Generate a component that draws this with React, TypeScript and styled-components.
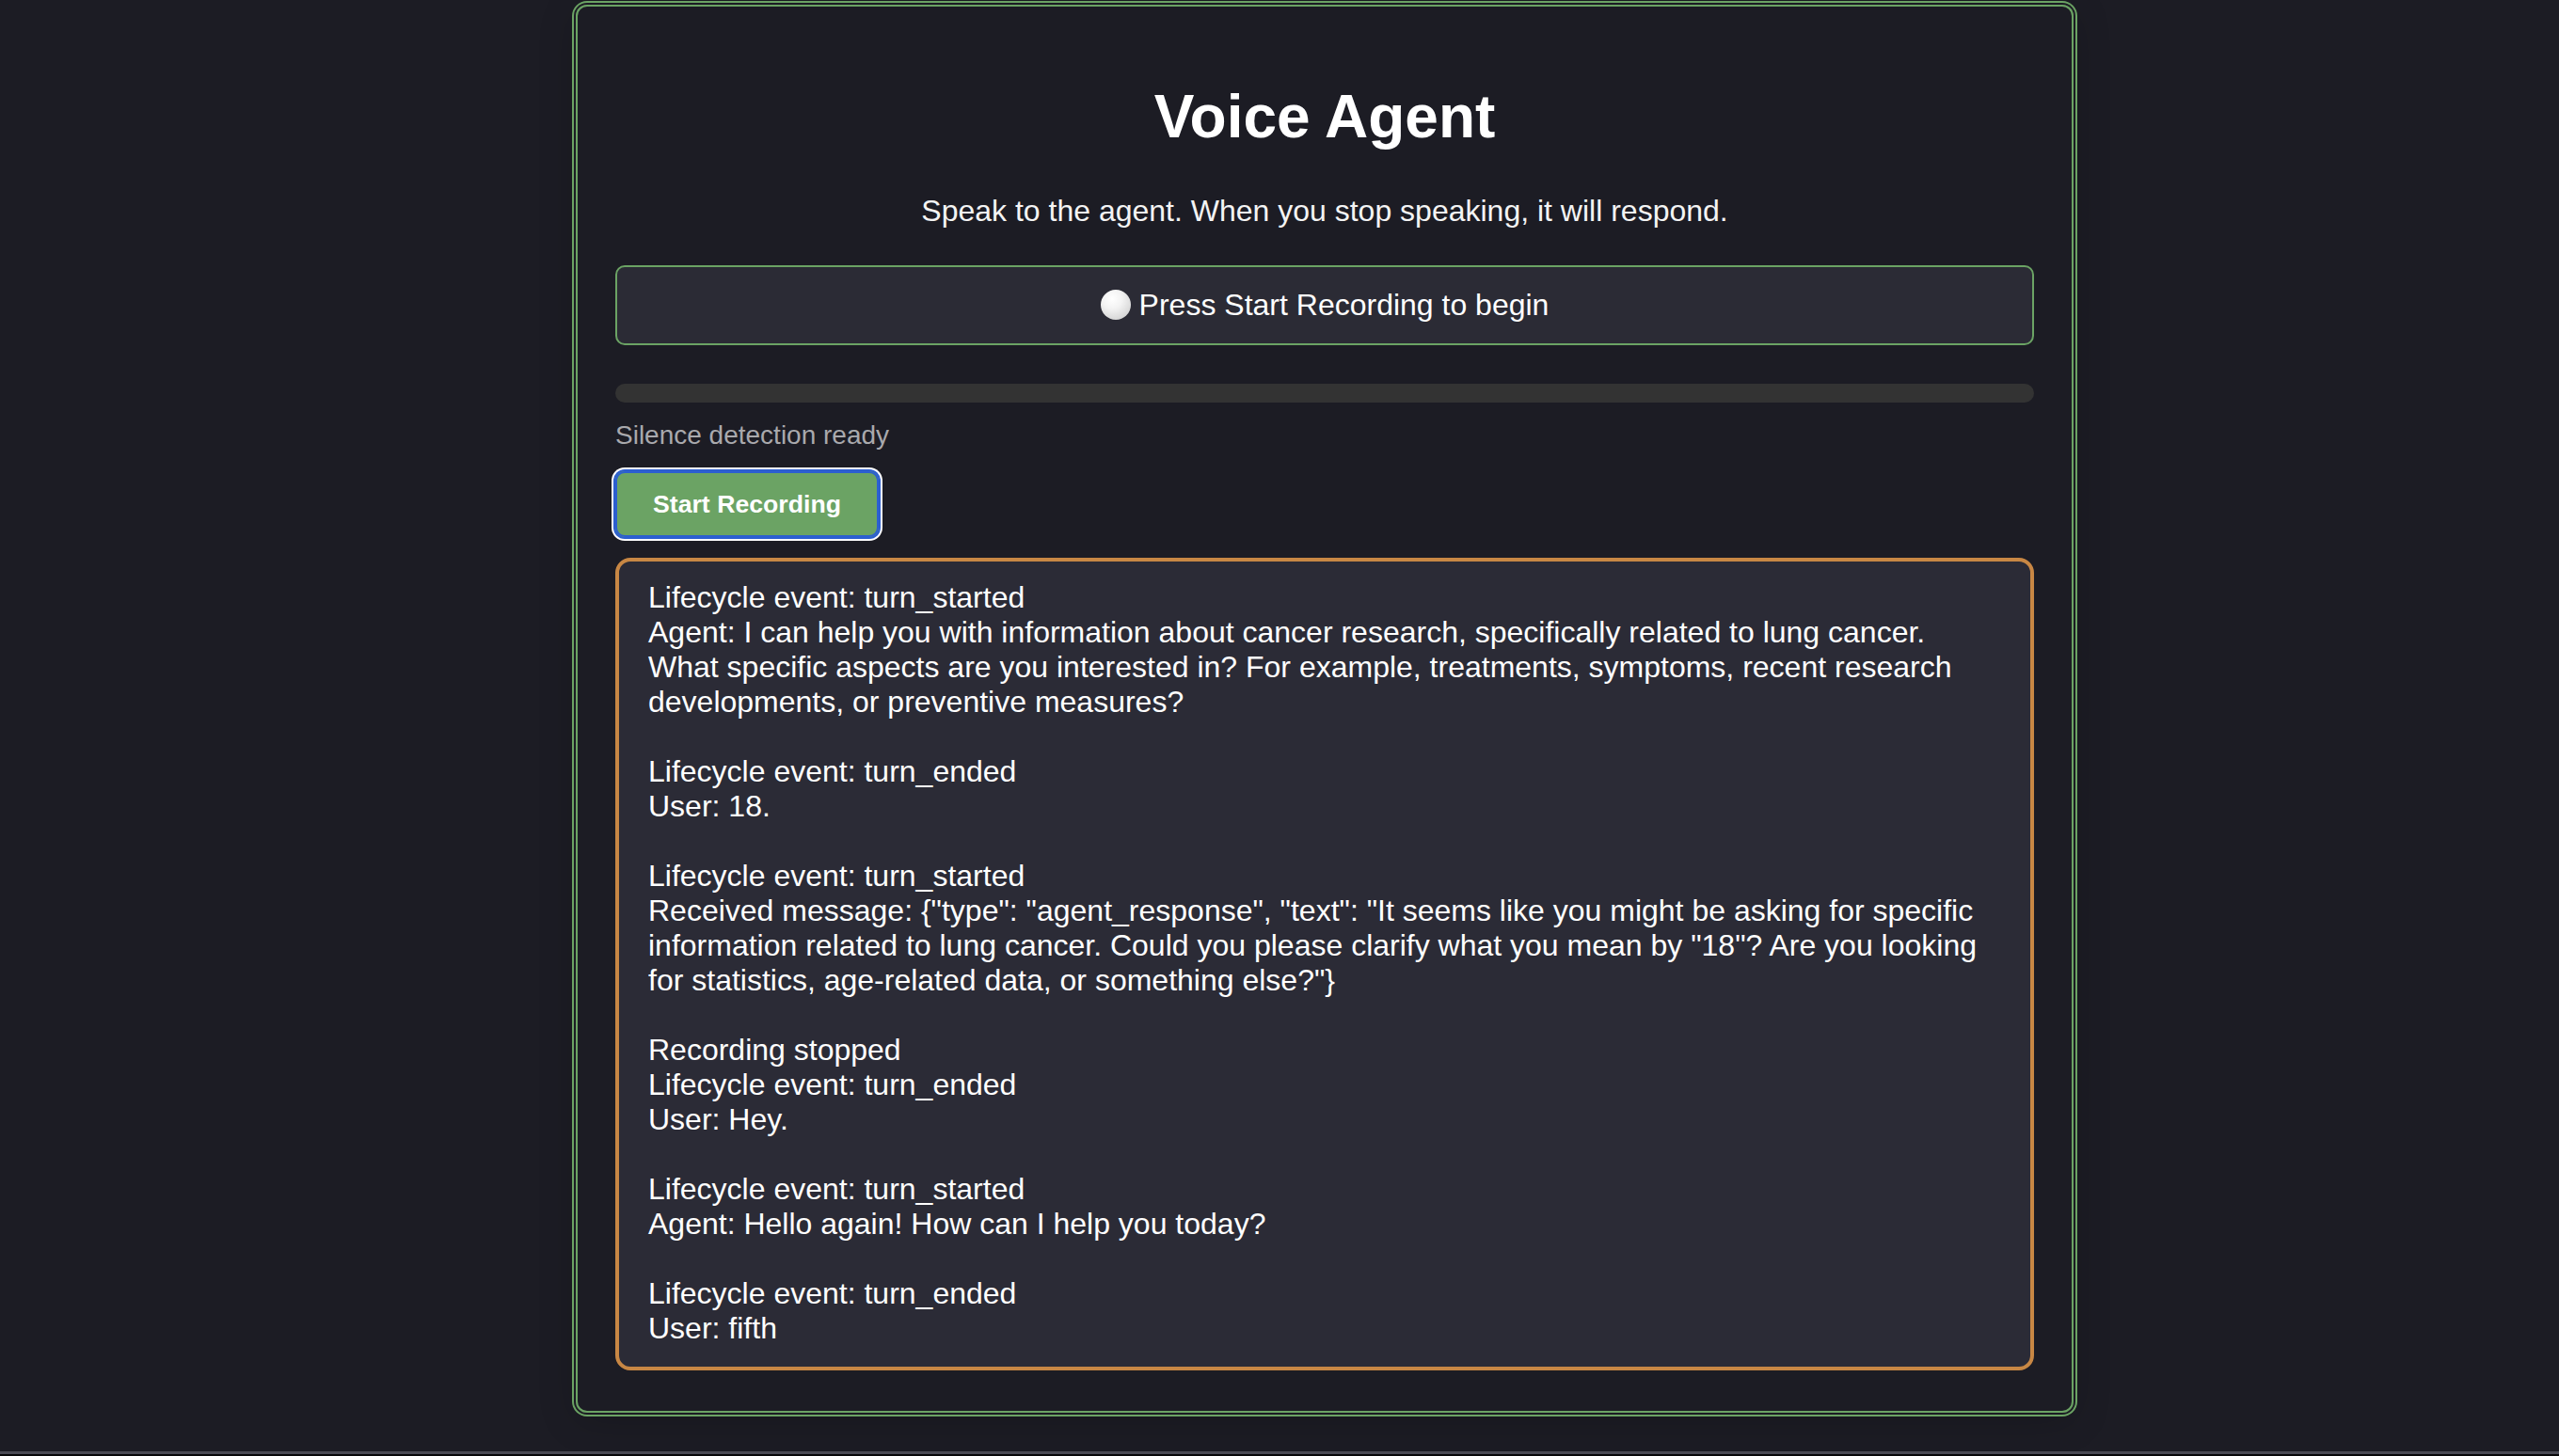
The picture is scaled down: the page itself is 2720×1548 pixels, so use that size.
import React from "react";
import styled, { createGlobalStyle } from "styled-components";

const GlobalStyle = createGlobalStyle`
  html, body {
    margin: 0;
    padding: 0;
    background: #1c1c24;
    font-family: "Liberation Sans", Arial, Helvetica, sans-serif;
    color: #ffffff;
  }
  #root {
    min-height: 100vh;
  }
`;

const Screen = styled.div`
  min-height: 100vh;
  display: flex;
  flex-direction: column;
  background: #1c1c24;
`;

const Stage = styled.main`
  flex: 1;
  display: flex;
  justify-content: center;
  align-items: flex-start;
  padding: 5px 0 0 96px;
`;

const BottomEdge = styled.div`
  height: 3px;
  background: #4a4a54;
  border-bottom: 2px solid #08080a;
`;

const Card = styled.section`
  box-sizing: border-box;
  width: 1592px;
  display: flex;
  flex-direction: column;
  padding: 40px 40px 43px;
  border: 2px solid #6ba364;
  border-radius: 12px;
  box-shadow: 0 0 0 2px #1c1c24, 0 0 0 4px #6ba364, 0 8px 40px rgba(0, 0, 0, 0.18);
`;

const Title = styled.h1`
  margin: 40px 0 0;
  font-size: 64px;
  line-height: 74px;
  font-weight: 700;
  text-align: center;
  color: #ffffff;
`;

const Subtitle = styled.p`
  margin: 45px 0 0;
  font-size: 32px;
  line-height: 37px;
  text-align: center;
  color: #f4f4f4;
`;

const StatusBox = styled.div`
  margin-top: 39px;
  padding: 22px 20px;
  border: 2px solid #6ba364;
  border-radius: 10px;
  background: #2b2b35;
  font-size: 32px;
  line-height: 37px;
  text-align: center;
  color: #ffffff;
`;

const StatusDot = styled.span`
  display: inline-block;
  width: 32px;
  height: 32px;
  margin-right: 9px;
  vertical-align: -5px;
  border-radius: 50%;
  background: radial-gradient(circle at 38% 30%, #ffffff 0%, #f3f3f3 35%, #d4d4d4 80%, #bdbdbd 100%);
`;

const ProgressTrack = styled.div`
  margin-top: 41px;
  height: 20px;
  border-radius: 10px;
  background: #333333;
  overflow: hidden;
`;

const ProgressFill = styled.div`
  height: 100%;
  background: #6ba364;
`;

const Hint = styled.div`
  margin-top: 19px;
  font-size: 28px;
  line-height: 32px;
  color: #a9a9ad;
`;

const RecordButton = styled.button`
  align-self: flex-start;
  margin-top: 22px;
  padding: 20px 40px;
  border: none;
  border-radius: 10px;
  background: #6ba364;
  color: #ffffff;
  font-family: "Liberation Sans", Arial, Helvetica, sans-serif;
  font-size: 26.67px;
  line-height: 30px;
  font-weight: 700;
  cursor: pointer;
  box-shadow: inset 0 0 0 2px #2c5fd0, 0 0 0 2px #2c5fd0, 0 0 0 4px #ffffff;
`;

const LogBox = styled.div`
  margin-top: 22px;
  padding: 20px 31px 22px;
  border: 4px solid #c88744;
  border-radius: 16px;
  background: #2b2b36;
  display: flex;
  flex-direction: column;
  gap: 37px;
`;

const LogEntry = styled.div`
  font-size: 32px;
  line-height: 37px;
  white-space: pre-wrap;
  color: #ffffff;
`;

const LOG: string[][] = [
  [
    "Lifecycle event: turn_started",
    "Agent: I can help you with information about cancer research, specifically related to lung cancer.",
    "What specific aspects are you interested in? For example, treatments, symptoms, recent research",
    "developments, or preventive measures?",
  ],
  ["Lifecycle event: turn_ended", "User: 18."],
  [
    "Lifecycle event: turn_started",
    'Received message: {"type": "agent_response", "text": "It seems like you might be asking for specific',
    'information related to lung cancer. Could you please clarify what you mean by "18"? Are you looking',
    'for statistics, age-related data, or something else?"}',
  ],
  ["Recording stopped", "Lifecycle event: turn_ended", "User: Hey."],
  ["Lifecycle event: turn_started", "Agent: Hello again! How can I help you today?"],
  ["Lifecycle event: turn_ended", "User: fifth"],
];

export default function App() {
  const level = 0;
  return (
    <>
      <GlobalStyle />
      <Screen>
        <Stage>
          <Card>
            <Title>Voice Agent</Title>
            <Subtitle>Speak to the agent. When you stop speaking, it will respond.</Subtitle>
            <StatusBox>
              <StatusDot aria-hidden="true" />
              Press Start Recording to begin
            </StatusBox>
            <ProgressTrack>
              <ProgressFill style={{ width: `${level}%` }} />
            </ProgressTrack>
            <Hint>Silence detection ready</Hint>
            <RecordButton type="button">Start Recording</RecordButton>
            <LogBox>
              {LOG.map((lines, i) => (
                <LogEntry key={i}>{lines.join("\n")}</LogEntry>
              ))}
            </LogBox>
          </Card>
        </Stage>
        <BottomEdge />
      </Screen>
    </>
  );
}
